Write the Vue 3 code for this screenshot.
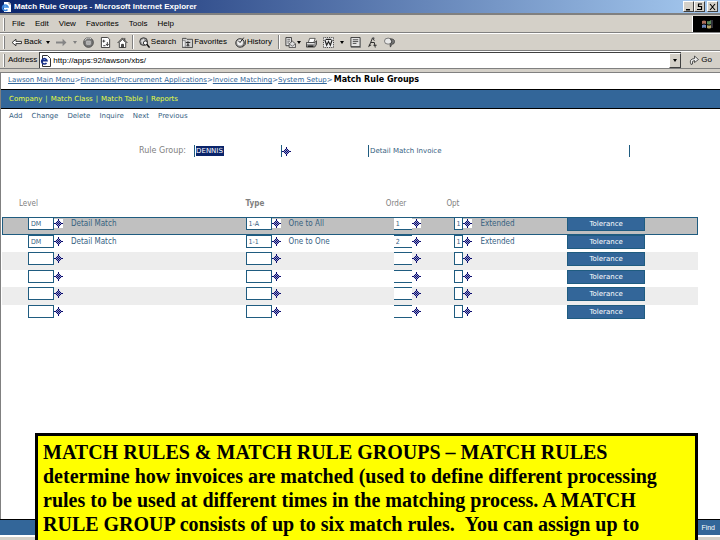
<script setup>
import { ref } from 'vue'

const menus = ['File', 'Edit', 'View', 'Favorites', 'Tools', 'Help']
const crumbs = ['Lawson Main Menu', 'Financials/Procurement Applications', 'Invoice Matching', 'System Setup']
const tabs = ['Company', 'Match Class', 'Match Table', 'Reports']
const actions = ['Add', 'Change', 'Delete', 'Inquire', 'Next', 'Previous']

const address = ref('http://apps:92/lawson/xbs/')
const ruleGroup = ref('DENNIS')
const description = ref('Detail Match Invoice')

const rules = ref([
  { level: 'DM', levelText: 'Detail Match', type: '1-A', typeText: 'One to All', order: '1', opt: '1', optText: 'Extended' },
  { level: 'DM', levelText: 'Detail Match', type: '1-1', typeText: 'One to One', order: '2', opt: '1', optText: 'Extended' },
  { level: '', levelText: '', type: '', typeText: '', order: '', opt: '', optText: '' },
  { level: '', levelText: '', type: '', typeText: '', order: '', opt: '', optText: '' },
  { level: '', levelText: '', type: '', typeText: '', order: '', opt: '', optText: '' },
  { level: '', levelText: '', type: '', typeText: '', order: '', opt: '', optText: '' }
])
const selected = ref(0)
</script>

<template>
  <div class="browser">
    <!-- shared lookup glyph -->
    <svg class="defs" aria-hidden="true">
      <symbol id="lookup" viewBox="0 0 9 9">
        <path d="M4.500 1L8 4.500 4.500 8 1 4.500z" fill="#8f96c8" />
        <path d="M4 0h1v2h-1zM3 2h1v1h-1zM5 2h1v1h-1zM2 3h1v1h-1zM4 3h1v1h-1zM6 3h1v1h-1zM0 4h2v1h-2zM3 4h1v1h-1zM5 4h1v1h-1zM7 4h2v1h-2zM2 5h1v1h-1zM4 5h1v1h-1zM6 5h1v1h-1zM3 6h1v1h-1zM5 6h1v1h-1zM4 7h1v2h-1z" fill="#0a0a6e" />
      </symbol>
    </svg>

    <header class="titlebar">
      <svg class="ie" viewBox="0 0 11 12" aria-hidden="true">
        <path d="M3 1h5l2 2v8H3z" fill="#fff" />
        <path d="M8 1v2h2" fill="none" stroke="#888" />
        <path d="M6.500 8.500A2.800 2.800 0 1 1 7 6H1.500" fill="none" stroke="#3a8ae0" stroke-width="1.600" />
      </svg>
      <h1>Match Rule Groups - Microsoft Internet Explorer</h1>
      <div class="winbuttons">
        <button type="button" aria-label="Minimize"><svg viewBox="0 0 9 8"><path d="M2 6h4v1.500H2z" /></svg></button>
        <button type="button" aria-label="Restore"><svg viewBox="0 0 9 8"><path d="M3 1h4M3.500 1v3M3 3.500h3.500V6.500H2" fill="none" stroke="#000" stroke-width="1.200" /></svg></button>
        <button type="button" aria-label="Close" class="close"><svg viewBox="0 0 9 8"><path d="M2 1l5 6M7 1L2 7" stroke="#000" stroke-width="1.100" /></svg></button>
      </div>
    </header>

    <nav class="bar menubar">
      <i class="grip"></i>
      <button v-for="m in menus" :key="m" type="button">{{ m }}</button>
      <span class="throbber">
        <svg viewBox="0 0 12 11" aria-hidden="true">
          <path d="M1 2q2-1 4 0v3q-2-1-4 0z" fill="#b0705c" />
          <path d="M6 2q2 1 4-1v4q-2 1-4 0z" fill="#5d8a5c" />
          <path d="M1 6q2-1 4 0v3q-2-1-4 0z" fill="#6d86b8" />
          <path d="M6 6q2 1 4 0v3q-2 1-4 0z" fill="#b5a468" />
          <path d="M11 1v8" stroke="#667" />
        </svg>
      </span>
    </nav>

    <div class="bar toolbar">
      <i class="grip"></i>
      <button type="button" class="back">
        <svg viewBox="0 0 10 10" aria-hidden="true"><path d="M1 5l3.500-3v2H9.500v2h-5v2z" fill="#fff" stroke="#222" stroke-width=".8" /></svg>Back
      </button>
      <i class="drop"></i>
      <button type="button" class="forward" aria-label="Forward">
        <svg viewBox="0 0 10 10"><path d="M9.500 5L6 1.500v2.500H0v2h6v2.500z" fill="#858585" /></svg>
      </button>
      <i class="drop dim"></i>
      <button type="button" class="stop" aria-label="Stop">
        <svg viewBox="0 0 12 12"><circle cx="6" cy="6" r="5.300" fill="#777" stroke="#333" stroke-width=".8" /><path d="M2 4a4.500 4.500 0 0 1 7-2" stroke="#ddd" fill="none" /><path d="M4 4.500h4v3.500H4z" fill="#aaa" stroke="#ccc" stroke-width=".8" /></svg>
      </button>
      <button type="button" class="refresh" aria-label="Refresh">
        <svg viewBox="0 0 12 12"><path d="M1.500.5h7l2 2v9h-9z" fill="#fff" stroke="#333" /><path d="M4 3v3M2.700 4.500h3M8 9V5.500M6.500 7.500L8 9.500l1.500-2M3.500 9.500H6" stroke="#333" fill="none" /></svg>
      </button>
      <button type="button" class="home" aria-label="Home">
        <svg viewBox="0 0 12 12"><path d="M.7 6.500L6 1l5.300 5.500" fill="none" stroke="#222" /><path d="M2.500 6v5.500h7V6L6 2.500z" fill="#fff" stroke="#333" /><path d="M5 8h2v3.500H5zM8.500 1v2.500" fill="#555" stroke="#333" /></svg>
      </button>
      <i class="sep"></i>
      <button type="button" class="search">
        <svg viewBox="0 0 12 12" aria-hidden="true"><circle cx="5" cy="5" r="4.200" fill="#999" stroke="#333" /><path d="M2 4l3-2 2 3-3 3z" fill="#ddd" /><circle cx="7" cy="6.500" r="2.200" fill="#fff" stroke="#222" /><path d="M8.500 8l3 3.500" stroke="#111" stroke-width="1.600" /></svg>Search
      </button>
      <button type="button" class="favorites">
        <svg viewBox="0 0 12 12" aria-hidden="true"><path d="M.5 2.500V1.500h4l1 1h6v9H.5z" fill="#d0d0d0" stroke="#444" /><path d="M6.500 4.500v6M4 6h5M5 10l1.500-2L8 10" stroke="#222" fill="none" /><path d="M.5 4h3v7h-3z" fill="#eee" stroke="#555" stroke-width=".6" /></svg>Favorites
      </button>
      <button type="button" class="history">
        <svg viewBox="0 0 12 12" aria-hidden="true"><circle cx="5.500" cy="6.500" r="4.700" fill="#999" stroke="#333" /><circle cx="5.500" cy="6" r="3.200" fill="#eee" /><path d="M5.500 6L9.500.7M5.500 6L3.500 4" stroke="#111" /><path d="M8 11l3.500-3V3" stroke="#444" fill="none" /></svg>History
      </button>
      <i class="sep"></i>
      <button type="button" class="mail" aria-label="Mail">
        <svg viewBox="0 0 12 12"><path d="M1 .5h6v9H1z" fill="#eee" stroke="#333" /><path d="M2.500 2.500h3M2.500 4.500h3M2.500 6.500h2" stroke="#555" /><path d="M4.500 7.500L8 4.500l3.500 3v4h-7z" fill="#ddd" stroke="#333" stroke-width=".8" /><path d="M4.500 7.500L8 10l3.500-2.500" fill="none" stroke="#555" stroke-width=".8" /></svg>
      </button>
      <i class="drop tight"></i>
      <button type="button" class="print" aria-label="Print">
        <svg viewBox="0 0 12 12"><path d="M4 1.500h6L8.500 6H2.500z" fill="#fff" stroke="#333" stroke-width=".8" /><path d="M.5 6h9l2-2v4l-2 3h-9z" fill="#999" stroke="#222" stroke-width=".8" /><path d="M1 7h8" stroke="#eee" /><path d="M2 10h6" stroke="#111" stroke-width="1.400" /></svg>
      </button>
      <button type="button" class="edit" aria-label="Edit">
        <svg viewBox="0 0 12 12"><path d="M.5.5h11v11H.5z" fill="#eee" stroke="#222" stroke-dasharray="1 1" /><path d="M2 3l2 6 2-4 2 4 2-6M3 2.500h6" fill="none" stroke="#222" stroke-width="1.300" /></svg>
      </button>
      <i class="drop"></i>
      <button type="button" class="discuss" aria-label="Discuss">
        <svg viewBox="0 0 12 12"><path d="M1 .5h10v10H1z" fill="#e4e4e4" stroke="#333" /><path d="M3 3h6M3 5h6M3 7h4" stroke="#444" /><path d="M1 11.500h10.500V2" stroke="#777" fill="none" /></svg>
      </button>
      <button type="button" class="find" aria-label="Research">
        <svg viewBox="0 0 10 12"><path d="M5 1L3 6h4l1 5.500M3 6L.8 11M5 1l2 3M1 9h2.500M6 9h3.500" stroke="#222" fill="none" /><circle cx="6" cy="1.500" r="1.200" fill="#555" /></svg>
      </button>
      <button type="button" class="talk" aria-label="Messenger">
        <svg viewBox="0 0 12 12"><ellipse cx="4.500" cy="4.500" rx="4" ry="3.300" fill="#e8e8e8" stroke="#555" stroke-width=".8" /><path d="M7 2q4.500 0 4.500 3T8.500 8L7 11l-.5-3q2-1 2-3z" fill="#777" stroke="#333" stroke-width=".8" /></svg>
      </button>
    </div>

    <form class="bar address" @submit.prevent>
      <i class="grip"></i>
      <label for="address">Address</label>
      <div class="combo">
        <svg class="ie" viewBox="0 0 11 12" aria-hidden="true">
          <path d="M2.500.5h5l3 3v8h-8z" fill="#fff" stroke="#333" />
          <path d="M6.500 8A2.700 2.700 0 1 1 7 5.800H2" fill="none" stroke="#16308c" stroke-width="1.600" />
        </svg>
        <input id="address" v-model="address" type="text">
        <button type="button" aria-label="Show addresses"><i class="drop"></i></button>
      </div>
      <button type="submit" class="go">
        <svg viewBox="0 0 10 10" aria-hidden="true"><path d="M2 9.500Q-.5 4 5.500 3.500V1l4 3.500-4 3V5.500Q2.500 5.500 3.500 9z" fill="#eee" stroke="#333" stroke-width=".8" /></svg>Go
      </button>
    </form>

    <main class="page">
      <nav class="crumbs">
        <template v-for="c in crumbs" :key="c"><a href="#">{{ c }}</a><span>&gt;</span></template>
        <strong>Match Rule Groups</strong>
      </nav>

      <nav class="tabs">
        <template v-for="(t, i) in tabs" :key="t"><span v-if="i">|</span><a href="#">{{ t }}</a></template>
      </nav>

      <nav class="actions">
        <a v-for="a in actions" :key="a" href="#">{{ a }}</a>
      </nav>

      <div class="group">
        <label for="group">Rule Group:</label>
        <div class="key">
          <input id="group" v-model="ruleGroup" type="text" size="6">
        </div>
        <button type="button" class="lookup" aria-label="Look up rule group"><svg><use href="#lookup" /></svg></button>
        <input v-model="description" class="description" type="text" aria-label="Description">
      </div>

      <table class="rules">
        <colgroup>
          <col class="c-level"><col class="c-type"><col class="c-order"><col class="c-opt"><col>
        </colgroup>
        <thead>
          <tr>
            <th class="level">Level</th>
            <th class="type">Type</th>
            <th class="order">Order</th>
            <th class="opt">Opt</th>
            <th></th>
          </tr>
        </thead>
        <tbody>
          <tr v-for="(r, i) in rules" :key="i" :class="{ selected: i === selected }" @click="selected = i">
            <td class="level">
              <div class="cell">
                <input v-model="r.level" type="text" aria-label="Level">
                <button type="button" class="lookup" aria-label="Look up level"><svg><use href="#lookup" /></svg></button>
                <span>{{ r.levelText }}</span>
              </div>
            </td>
            <td>
              <div class="cell">
                <input v-model="r.type" type="text" aria-label="Type">
                <button type="button" class="lookup" aria-label="Look up type"><svg><use href="#lookup" /></svg></button>
                <span>{{ r.typeText }}</span>
              </div>
            </td>
            <td>
              <div class="cell">
                <input v-model="r.order" class="mid" type="text" aria-label="Order">
                <button type="button" class="lookup" aria-label="Look up order"><svg><use href="#lookup" /></svg></button>
              </div>
            </td>
            <td>
              <div class="cell">
                <input v-model="r.opt" class="tiny" type="text" aria-label="Opt">
                <button type="button" class="lookup" aria-label="Look up option"><svg><use href="#lookup" /></svg></button>
                <span>{{ r.optText }}</span>
              </div>
            </td>
            <td><button type="button" class="tolerance">Tolerance</button></td>
          </tr>
        </tbody>
      </table>
    </main>

    <footer class="footer"><a href="#">Find</a></footer>
    <div class="status"></div>

    <aside class="note">
      MATCH RULES &amp; MATCH RULE GROUPS – MATCH RULES determine how invoices are matched (used to define different processing rules to be used at different times in the matching process. A MATCH RULE GROUP consists of up to six match rules. &nbsp;You can assign up to
    </aside>
  </div>
</template>

<style>
body {
  margin: 0;
}
</style>

<style scoped>
.browser {
  position: relative;
  display: flex;
  flex-direction: column;
  height: 100vh;
  overflow: hidden;
  background: #fff;
  font-family: 'Liberation Sans', Arial, sans-serif;
  font-size: 8px;
  line-height: 12px;
  color: #000;
}

.browser * {
  box-sizing: border-box;
}

.defs {
  position: absolute;
  width: 0;
  height: 0;
}

button,
input {
  margin: 0;
  padding: 0;
  border: 0;
  border-radius: 0;
  background: none;
  font: inherit;
  color: inherit;
}

svg {
  display: block;
  flex: none;
}

.ie {
  width: 11px;
  height: 12px;
}

/* window chrome */
.titlebar {
  display: flex;
  align-items: center;
  gap: 2px;
  height: 13px;
  padding: 0 2px 0 1px;
  background: linear-gradient(90deg, #0a246a, #a6caf0);
}

.titlebar h1 {
  flex: 1;
  margin: 0;
  font-size: 8px;
  font-weight: bold;
  color: #fff;
}

.winbuttons {
  display: flex;
}

.winbuttons button {
  width: 11px;
  height: 11px;
  background: #d4d0c8;
  border: 1px solid;
  border-color: #fff #404040 #404040 #fff;
}

.winbuttons .close {
  margin-left: 2px;
}

.winbuttons svg {
  width: 9px;
  height: 8px;
}

.bar {
  display: flex;
  align-items: center;
  height: 18px;
  padding-left: 3px;
  background: #d4d0c8;
  border-top: 1px solid #fff;
  border-bottom: 1px solid #808080;
}

.grip {
  width: 2px;
  height: 13px;
  border-left: 1px solid #fff;
  border-right: 1px solid #808080;
}

.menubar {
  gap: 10px;
  height: 20px;
  padding-top: 1px;
  border-top: 2px solid #808080;
}

.menubar .grip {
  margin-right: -3px;
}

.throbber {
  display: flex;
  align-items: center;
  justify-content: center;
  align-self: stretch;
  width: 28px;
  margin-left: auto;
  background: #000;
  border-left: 1px solid #fff;
}

.throbber svg {
  width: 12px;
  height: 11px;
}

.toolbar button {
  display: flex;
  align-items: center;
  gap: 1px;
  margin-right: 6px;
}

.toolbar svg {
  width: 11px;
  height: 11px;
}

.toolbar .back {
  gap: 2px;
  margin: 0 4px 0 6px;
}

.toolbar .home {
  margin-right: 4px;
}

.toolbar .favorites {
  margin-right: 8px;
}

.drop {
  width: 0;
  border: 2px solid transparent;
  border-top: 3px solid #000;
  border-bottom: 0;
}

.toolbar .drop {
  margin-right: 6px;
}

.toolbar .tight {
  margin: 0 5px 0 -5px;
}

.dim {
  border-top-color: #808080;
}

.sep {
  width: 2px;
  height: 14px;
  margin-right: 5px;
  border-left: 1px solid #808080;
  border-right: 1px solid #fff;
}

.address label {
  margin: 0 2px 0 3px;
}

.combo {
  display: flex;
  flex: 1;
  align-items: center;
  align-self: stretch;
  gap: 2px;
  background: #fff;
  border-top: 1px solid #404040;
  border-left: 1px solid #404040;
}

.combo input {
  flex: 1;
  min-width: 0;
}

.combo button {
  display: flex;
  align-items: center;
  justify-content: center;
  align-self: stretch;
  width: 12px;
  background: #d4d0c8;
  border: 1px solid;
  border-color: #fff #404040 #404040 #fff;
}

.go {
  display: flex;
  align-items: center;
  gap: 2px;
  margin: 0 8px;
}

.go svg {
  width: 10px;
  height: 10px;
}

/* page */
.page {
  flex: 1;
  min-height: 0;
  margin-top: 3px;
  border-top: 1px solid #808080;
  border-left: 1px solid #808080;
  box-shadow: 0 -3px 0 #d4d0c8;
  font-family: 'DejaVu Sans', Verdana, sans-serif;
}

a {
  color: #336699;
  text-decoration: none;
}

.crumbs {
  display: flex;
  padding: 1px 7px 3px;
  color: #336699;
  font-size: 7px;
}

.crumbs a {
  text-decoration: underline;
}

.crumbs strong {
  margin-left: 1px;
  font-size: 8px;
  color: #000;
}

.tabs {
  display: flex;
  gap: 3px;
  padding: 3px 8px;
  background: #336699;
  border-top: 1px solid #000;
  border-bottom: 1px solid #000;
  color: #ccff66;
}

.tabs a {
  color: #e8ff3c;
}

.tabs,
.actions {
  font-size: 7px;
}

.actions {
  display: flex;
  gap: 9px;
  padding: 1px 8px;
}

.actions a {
  color: #35607f;
}

.group {
  display: flex;
  align-items: center;
  margin: 22px 12.500% 0 19.200%;
  color: #808080;
}

.group .key {
  width: 88px;
  margin-left: 8px;
  border-left: 1px solid #1f5c80;
  border-right: 1px solid #1f5c80;
}

.group .key input {
  display: block;
  width: 28px;
  height: 10px;
  margin: 1px;
  background: #0a246a;
  color: #fff;
  font-size: 7px;
}

.group .description {
  flex: 1;
  min-width: 0;
  margin-left: 77px;
  padding-left: 1px;
  border-left: 1px solid #1f5c80;
  border-right: 1px solid #1f5c80;
  color: #35607f;
  font-size: 7px;
}

.lookup svg {
  width: 9px;
  height: 9px;
}

.rules {
  width: calc(100% - 23px);
  margin: 41px 22px 0 1px;
  table-layout: fixed;
  border-collapse: collapse;
  font-family: 'DejaVu Sans Condensed', 'DejaVu Sans', sans-serif;
}

.c-level {
  width: 35%;
}

.c-type {
  width: 21.300%;
}

.c-order {
  width: 8.700%;
}

.c-opt {
  width: 16.200%;
}

.rules th {
  padding: 0 0 7px;
  text-align: left;
  font-weight: normal;
  color: #808080;
}

.rules .type {
  font-weight: bold;
}

.rules th.level {
  padding-left: 17px;
}

.rules th.order,
.rules th.opt {
  position: relative;
  left: -8px;
}

.rules td {
  height: 18px;
  padding: 0;
  vertical-align: top;
}

.rules tr:nth-child(even) td {
  height: 17px;
}

.rules td.level {
  padding-left: 26px;
}

.rules tbody tr:nth-child(odd) {
  background: #ededed;
}

.rules tbody tr.selected {
  background: #c0c0c0;
  outline: 1px solid #1f5c80;
  outline-offset: -1px;
}

.cell {
  display: flex;
  align-items: center;
  height: 13px;
}

.cell input {
  width: 26px;
  height: 13px;
  padding-left: 2px;
  background: #fff;
  border: 1px solid #1f5c80;
  color: #35607f;
  font-size: 7px;
}

.cell .mid {
  width: 18px;
  border-left: 0;
  border-right: 0;
}

.cell .tiny {
  width: 9px;
  padding-left: 1px;
}

.cell .lookup {
  margin-right: 8px;
}

.selected .lookup {
  background: #fff;
}

.cell span {
  color: #35607f;
  white-space: nowrap;
}

.tolerance {
  display: block;
  width: 78px;
  height: 14px;
  background: #336699;
  border: 1px solid #1f5c80;
  color: #fff;
  font-family: 'DejaVu Sans', Verdana, sans-serif;
  font-size: 7px;
}

.footer {
  display: flex;
  align-items: center;
  justify-content: flex-end;
  height: 16px;
  padding-right: 5px;
  background: #336699;
  border-top: 1px solid #000;
}

.footer a {
  color: #fff;
  font-size: 7px;
}

.status {
  height: 5px;
  background: #d4d0c8;
  border-top: 2px solid #fff;
}

/* caption laid over the screen, running past its lower edge */
.note {
  position: absolute;
  top: 433px;
  left: 35px;
  right: 22px;
  bottom: -3px;
  padding: 4px 5px;
  overflow: hidden;
  background: #ffff00;
  border: 3px solid #000;
  font-family: 'Liberation Serif', 'Times New Roman', serif;
  font-size: 20px;
  font-weight: bold;
  line-height: 24px;
}
</style>
